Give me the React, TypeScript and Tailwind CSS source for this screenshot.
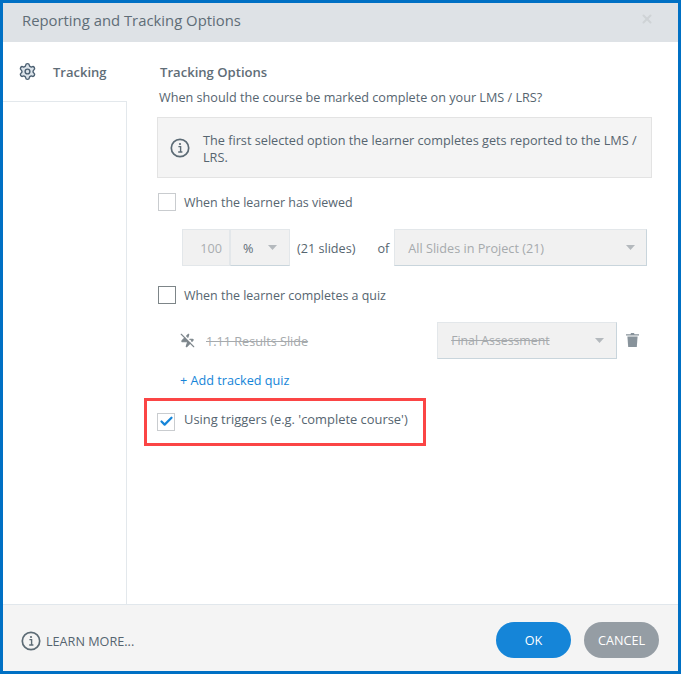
import { Check, Settings, X, ZapOff } from "lucide-react";

function InfoIcon({ className }: { className?: string }) {
  return (
    <svg viewBox="0 0 20 20" className={className} fill="none">
      <circle cx="10" cy="10" r="8.7" stroke="#5c6b75" strokeWidth="1.7" />
      <path d="M8.4 8.6h2.2v5.2M8.2 14h4.2" stroke="#5c6b75" strokeWidth="1.4" />
      <circle cx="10" cy="6" r="1.1" fill="#5c6b75" />
    </svg>
  );
}

function Caret({ color = "#b4b9bd" }: { color?: string }) {
  return (
    <svg viewBox="0 0 9 5" className="h-[5px] w-[9px]">
      <path d="M0 0h9L4.5 5z" fill={color} />
    </svg>
  );
}

function TrashIcon() {
  return (
    <svg viewBox="0 0 13 14" className="h-[14px] w-[13px]">
      <path d="M4.5 1.2 5 0h3l.5 1.2H13v1.4H0V1.2z" fill="#88939b" />
      <path d="M1.4 3.6h10.2l-.8 10.4H2.2z" fill="#88939b" />
    </svg>
  );
}

function Box({ children, dark }: { children?: React.ReactNode; dark?: boolean }) {
  return (
    <div
      className={`flex h-[18px] w-[18px] shrink-0 items-center justify-center border bg-white ${
        dark ? "border-[#7d8588]" : "border-[#c9cccf]"
      }`}
    >
      {children}
    </div>
  );
}

export default function App() {
  return (
    <div className="flex h-[674px] w-[681px] flex-col border-[3px] border-[#0070c4] bg-white font-['Open_Sans',sans-serif] text-[12.65px] text-[#566570]">
      <div className="flex h-[39px] shrink-0 items-center justify-between bg-[#dee2e6] pb-[4px] pl-[19px] pr-[24px]">
        <span className="text-[14.85px] text-[#5f6d77]">Reporting and Tracking Options</span>
        <X size={14} strokeWidth={3.5} className="mb-[4px] text-[#cfd3d6]" />
      </div>

      <div className="flex min-h-0 flex-1">
        <div className="flex w-[124px] shrink-0 flex-col">
          <div className="flex h-[59px] shrink-0 items-start gap-[16px] pl-[15px] pt-[20px] font-semibold">
            <Settings size={19} fill="#dbe3ea" className="text-[#4c6072]" strokeWidth={1.8} />
            <span className="pt-[1px] text-[13px] leading-[18px] text-[#5f6d77]">Tracking</span>
          </div>
          <div className="flex-1 border-r border-t border-[#e3e8ec]" />
        </div>

        <div className="min-w-0 flex-1 pl-[32px] pr-[26px] pt-[21px]">
          <div className="pl-[1px] text-[13.1px] font-semibold leading-[18px] text-[#5f6d77]">Tracking Options</div>
          <div className="mt-[7px] leading-[18px]">When should the course be marked complete on your LMS / LRS?</div>

          <div className="-ml-[2px] mt-[11px] flex h-[61px] items-center gap-[13px] border border-[#e3e3e3] bg-[#f4f4f4] pl-[12px] pr-[8px]">
            <InfoIcon className="h-[20px] w-[20px] shrink-0" />
            <p className="pt-[2px] text-[12.7px] leading-[17px]">
              The first selected option the learner completes gets reported to the LMS / LRS.
            </p>
          </div>

          <div className="-ml-[1px] mt-[15px] flex items-start gap-[8px]">
            <Box />
            <span className="mt-[1px] text-[12.45px] leading-[18px]">When the learner has viewed</span>
          </div>

          <div className="mt-[17px] flex h-[37px] items-center pl-[23px]">
            <div className="flex h-full w-[48px] items-center justify-end border border-[#e3e7ea] bg-[#f1f1f1] pr-[7px] pt-[2px] text-[#a9adb0]">
              100
            </div>
            <div className="flex h-full w-[60px] items-center justify-between border border-[#e3e7ea] border-b-[#c9d5dc] bg-[#f1f1f1] pl-[12px] pr-[12px] text-[#5f6d77]">
              <span className="mt-[2px]">%</span>
              <Caret />
            </div>
            <span className="ml-[7px] mt-[2px]">(21 slides)</span>
            <span className="ml-[22px] mt-[2px]">of</span>
            <div className="ml-[5px] flex h-full w-[253px] items-center justify-between border border-[#e3e7ea] border-b-[#c9d5dc] border-r-[#c9d5dc] bg-[#f1f1f1] pl-[13px] pr-[11px] text-[#a6aaad]">
              <span className="mt-[2px]">All Slides in Project (21)</span>
              <Caret />
            </div>
          </div>

          <div className="-ml-[1px] mt-[20px] flex items-start gap-[8px]">
            <Box dark />
            <span className="mt-[1px] text-[12.45px] leading-[18px]">When the learner completes a quiz</span>
          </div>

          <div className="mt-[17px] flex h-[37px] items-center pl-[21px]">
            <ZapOff size={15} fill="#7d868c" className="text-[#7d868c]" strokeWidth={1.8} />
            <span className="ml-[11px] mt-[2px] text-[#a6aaad] line-through">1.11 Results Slide</span>
            <div className="ml-[129px] flex h-full w-[180px] items-center justify-between border border-[#e3e7ea] border-b-[#c9d5dc] border-r-[#c9d5dc] bg-[#f1f1f1] pl-[13px] pr-[12px] text-[12.3px] text-[#a6aaad] line-through">
              <span className="mt-[2px]">Final Assessment</span>
              <Caret />
            </div>
            <span className="mb-[2px] ml-[9px]">
              <TrashIcon />
            </span>
          </div>

          <div className="mt-[12px] pl-[21px] leading-[18px] text-[#1585d8]">+ Add tracked quiz</div>

          <div className="-ml-[15px] mt-[9px] flex h-[48px] w-[282px] items-center gap-[8px] border-[3px] border-[#fb4545] pb-[1px] pl-[10px]">
            <Box>
              <Check size={15} strokeWidth={3.6} className="text-[#1585d8]" />
            </Box>
            <span className="mb-[5px] ml-[1px] text-[12.9px] leading-[18px]">Using triggers (e.g. 'complete course')</span>
          </div>
        </div>
      </div>

      <div className="flex h-[67px] shrink-0 items-center justify-between border-t border-[#e1e7ec] bg-[#f4f4f4] pl-[18px] pr-[19px]">
        <div className="flex items-center gap-[5px] pt-[6px]">
          <InfoIcon className="h-[20px] w-[20px]" />
          <span className="leading-[18px]">LEARN MORE...</span>
        </div>
        <div className="flex gap-[13px] pt-[4px]">
          <button className="h-[36px] w-[75px] rounded-[18px] bg-[#1585d8] pt-[1px] text-white">OK</button>
          <button className="h-[36px] w-[75px] rounded-[18px] bg-[#959da4] pt-[1px] text-white">CANCEL</button>
        </div>
      </div>
    </div>
  );
}
